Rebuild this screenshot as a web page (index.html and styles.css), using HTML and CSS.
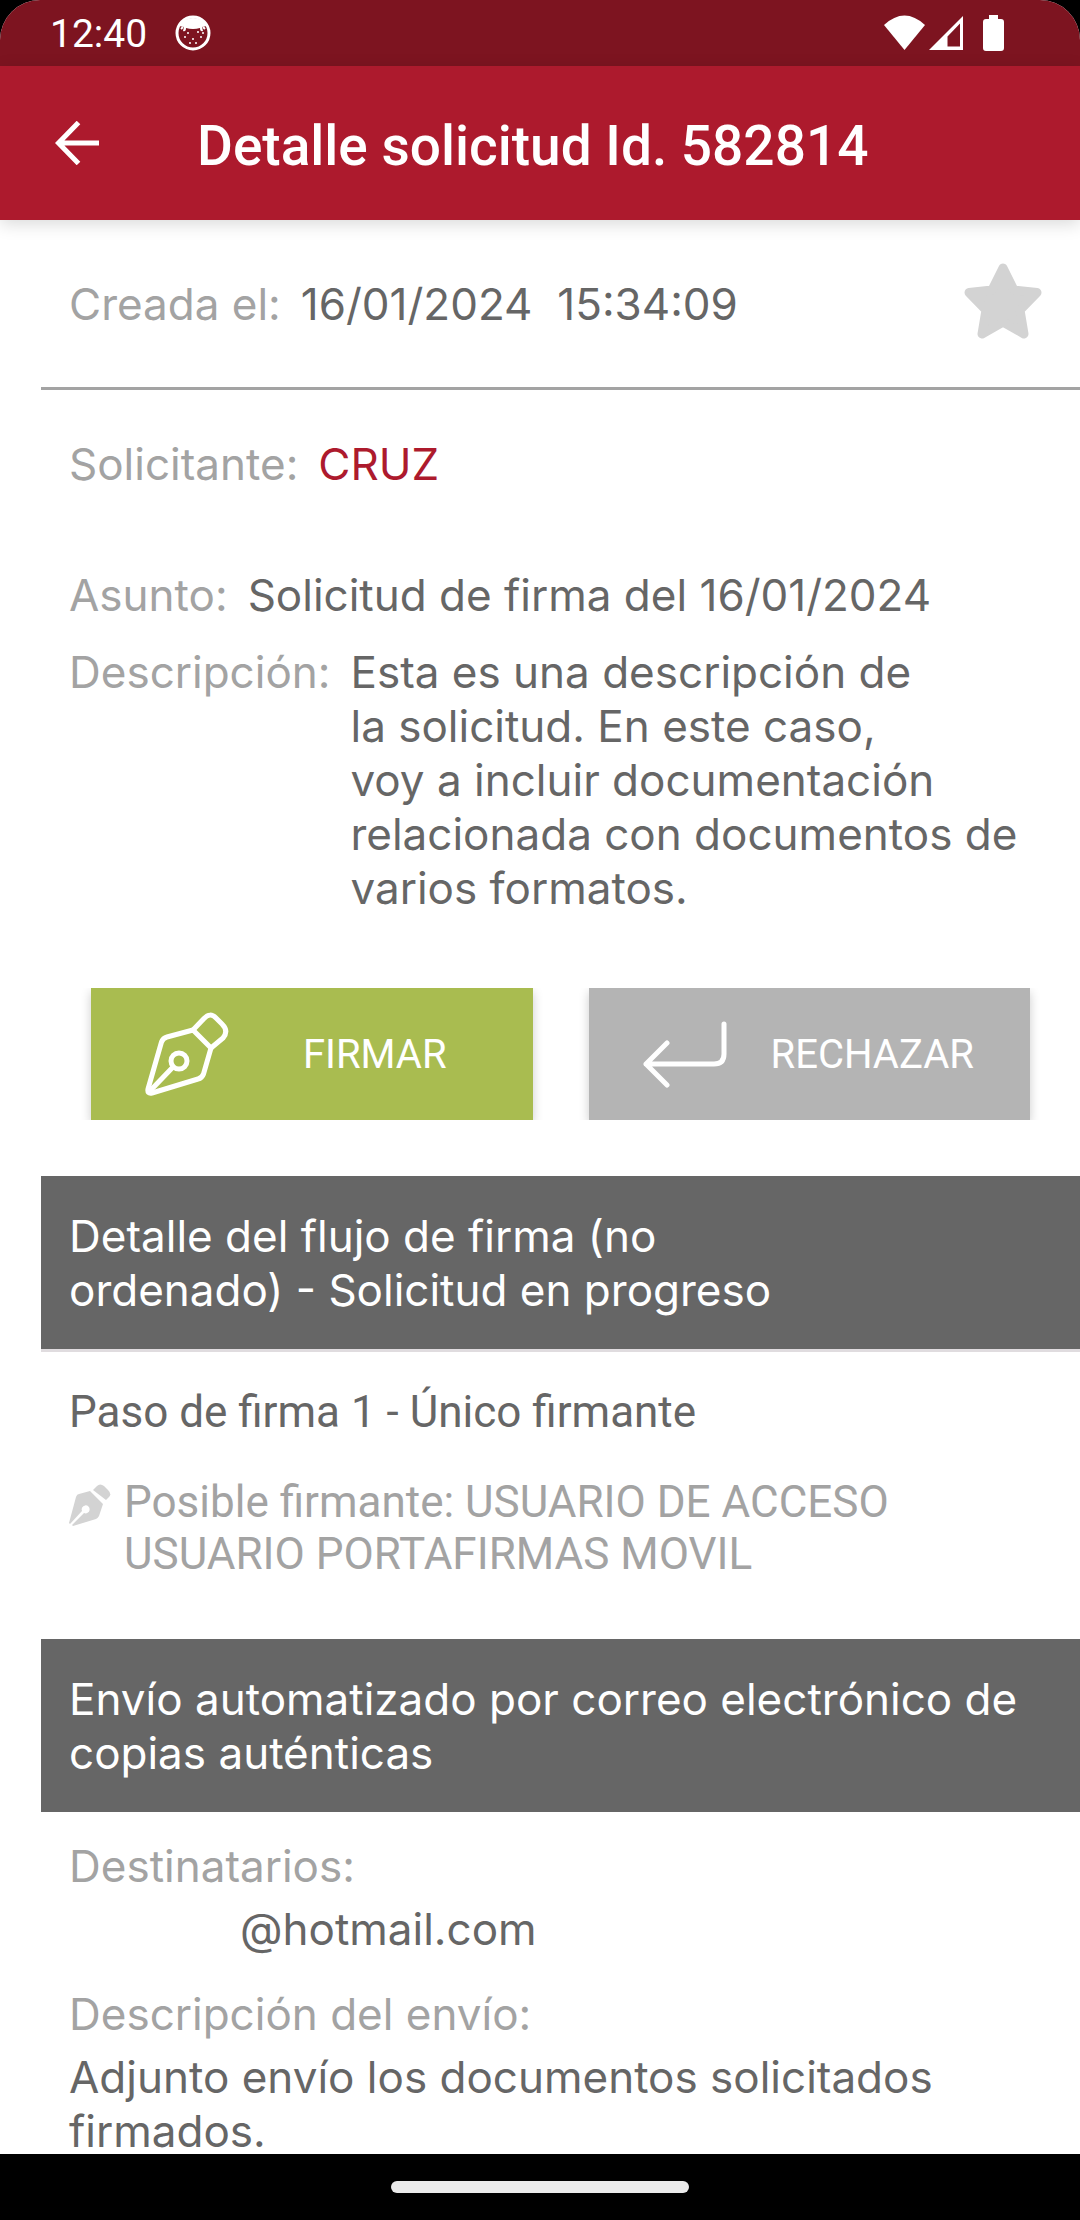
FILE: index.html
```html
<!DOCTYPE html>
<html lang="es">
<head>
    <meta charset="UTF-8">
    <meta name="viewport" content="width=device-width, initial-scale=1.0">
    <title>Detalle solicitud</title>
    <link rel="stylesheet" href="styles.css">
</head>
<body>
    <div class="screen">
        <div class="status-bar">
            <span class="clock">12:40</span>
            <svg class="cat-icon" viewBox="0 0 36 36">
                <circle cx="18" cy="18" r="16" fill="none" stroke="#fff" stroke-width="3"/>
                <path d="M7 7Q18-1 29 7L32 11L27 12L28 16Q25 17 25 13Q18 15 11 13Q11 17 8 16L9 12L4 11Z" fill="#fff"/>
                <path d="M6 14L8 12M30 14L28 12" stroke="#fff" stroke-width="2"/>
                <g fill="#fff">
                    <circle cx="13" cy="18" r="1"/><circle cx="23" cy="17" r="1"/>
                    <circle cx="10" cy="22" r="1"/><circle cx="18" cy="24" r="1"/>
                    <circle cx="26" cy="22" r="1"/><circle cx="15" cy="28" r="1"/>
                    <circle cx="21" cy="28" r="1"/><circle cx="28" cy="18" r="1"/>
                </g>
            </svg>
            <div class="status-icons">
                <svg width="41" height="36" viewBox="0 0 41 36"><path d="M0 10Q20.500-9 41 10L20.500 35Z" fill="#fff"/></svg>
                <svg class="signal" width="34" height="36" viewBox="0 0 34 36"><path fill-rule="evenodd" d="M34 1V35H0ZM31 8.500L18.500 21.500V31.500H31Z" fill="#fff"/></svg>
                <svg width="21" height="36" viewBox="0 0 21 36"><path d="M6 0H15V4H18Q21 4 21 7V33Q21 36 18 36H3Q0 36 0 33V7Q0 4 3 4H6Z" fill="#fff"/></svg>
            </div>
        </div>

        <header class="app-bar">
            <button class="back" type="button" aria-label="Volver">
                <svg width="44" height="44" viewBox="0 0 44 44"><path d="M23.500 1.500L3.500 22L23.500 42.500M3.500 22H44" fill="none" stroke="#fff" stroke-width="5"/></svg>
            </button>
            <h1>Detalle solicitud Id. 582814</h1>
        </header>

        <main>
            <div class="created">
                <div class="field">
                    <span class="label">Creada el:</span>
                    <span class="value">16/01/2024&nbsp; 15:34:09</span>
                </div>
                <button class="star" type="button" aria-label="Favorito">
                    <svg width="78" height="76" viewBox="0 0 78 76"><path d="M39 5L50 27L73 29.500L56 47L60 71L39 59L18 71L22 47L5 29.500L28 27Z" fill="#d3d3d3" stroke="#d3d3d3" stroke-width="9" stroke-linejoin="round"/></svg>
                </button>
            </div>

            <div class="info">
                <div class="field applicant">
                    <span class="label">Solicitante:</span>
                    <span class="name">CRUZ</span>
                </div>
                <div class="field subject">
                    <span class="label">Asunto:</span>
                    <span class="value">Solicitud de firma del 16/01/2024</span>
                </div>
                <div class="field">
                    <span class="label">Descripción:</span>
                    <span class="value">Esta es una descripción de<br>la solicitud. En este caso,<br>voy a incluir documentación relacionada con documentos de varios formatos.</span>
                </div>
            </div>

            <div class="actions">
                <button class="sign" type="button">
                    <svg width="84" height="84" viewBox="0 0 84 84" fill="none" stroke="#fff" stroke-width="5" stroke-linejoin="round" stroke-linecap="round">
                        <path d="M48 18L22 25Q18 26 16.500 30L3 77Q2 82 7 81L53 67Q57 66 58.500 62L66 36Z"/>
                        <path d="M48 18L59 6.500Q65 0 71 6L77 12Q84 19 78 26L66 36"/>
                        <circle cx="34" cy="49" r="8"/>
                        <path d="M28 55L4 80"/>
                    </svg>
                    <span>FIRMAR</span>
                </button>
                <button class="reject" type="button">
                    <svg width="84" height="84" viewBox="0 0 84 84" fill="none" stroke="#fff" stroke-width="5" stroke-linejoin="round" stroke-linecap="round">
                        <path d="M81 12V42Q81 52 71 52H3M24 31L3 52L24 73"/>
                    </svg>
                    <span>RECHAZAR</span>
                </button>
            </div>

            <h2 class="ruled">Detalle del flujo de firma (no<br>ordenado) - Solicitud en progreso</h2>
            <div class="flow">
                <p class="step">Paso de firma 1 - Único firmante</p>
                <div class="signer">
                    <svg width="42" height="42" viewBox="0 0 42 42" fill="#d3d3d3">
                        <path d="M21 7L10 10Q8 10 7 13L0 39L1 40L13 27A4 4 0 1 1 15 29L3 41L4 42L27 35Q29 34 30 32L34 20Z"/>
                        <path d="M24 6L28 2Q31-1 35 2L39 6Q43 10 40 13L37 16Z"/>
                    </svg>
                    <p>Posible firmante: USUARIO DE ACCESO USUARIO PORTAFIRMAS MOVIL</p>
                </div>
            </div>

            <h2>Envío automatizado por correo electrónico de copias auténticas</h2>
            <div class="delivery">
                <p class="label">Destinatarios:</p>
                <p class="value recipient">@hotmail.com</p>
                <p class="label">Descripción del envío:</p>
                <p class="value">Adjunto envío los documentos solicitados firmados.</p>
            </div>
        </main>
    </div>

    <div class="nav-bar"><div class="handle"></div></div>
</body>
</html>
```
FILE: styles.css
```css
* {
    margin: 0;
    padding: 0;
    box-sizing: border-box;
}
body {
    display: flex;
    flex-direction: column;
    height: 100vh;
    background: #000;
    font-family: Inter, sans-serif;
    font-size: 44px;
    line-height: 54px;
    color: #666;
}
svg {
    display: block;
    flex: none;
}
button {
    border: none;
    background: none;
    cursor: pointer;
}
.screen {
    flex: 1;
    min-height: 0;
    display: flex;
    flex-direction: column;
    background: #fff;
    border-radius: 40px 40px 0 0;
    overflow: hidden;
}

/* Status bar */
.status-bar {
    flex: none;
    display: flex;
    align-items: center;
    height: 66px;
    padding: 0 76px 0 50px;
    background: #7d1420;
    color: #fff;
    font-family: Roboto, sans-serif;
    font-size: 39px;
}
.clock {
    padding-top: 2px;
}
.cat-icon {
    width: 36px;
    height: 36px;
    margin-left: 28px;
}
.status-icons {
    display: flex;
    margin-left: auto;
}
.signal {
    margin: 0 20px 0 4px;
}

/* App bar */
.app-bar {
    flex: none;
    display: flex;
    align-items: center;
    gap: 98px;
    height: 154px;
    padding: 0 55px;
    background: #ad1a2d;
    color: #fff;
    box-shadow: 0 4px 16px rgba(0, 0, 0, 0.15);
}
.app-bar h1 {
    font-family: Roboto, sans-serif;
    font-size: 55px;
    font-weight: 500;
    line-height: 66px;
    padding-top: 6px;
}

main {
    flex: 1;
    min-height: 0;
    padding-left: 41px;
    overflow: hidden;
}
.created {
    display: flex;
    align-items: center;
    justify-content: space-between;
    height: 170px;
    padding: 0 38px 0 28px;
    border-bottom: 3px solid #a3a3a3;
}
.star {
    margin-bottom: 6px;
}
.field {
    display: flex;
    gap: 20px;
}
.label {
    flex: none;
    color: #a3a3a3;
}
.name {
    color: #ad1a2d;
}
.info {
    padding: 47px 60px 73px 28px;
}
.applicant {
    margin-bottom: 77px;
}
.subject {
    margin-bottom: 23px;
}

/* Sign and reject buttons */
.actions {
    display: flex;
    gap: 56px;
    padding: 0 50px;
    margin-bottom: 56px;
    overflow: hidden;
}
.actions button {
    flex: 1;
    display: flex;
    align-items: center;
    height: 132px;
    padding: 0 12px 0 54px;
    color: #fff;
    font-family: Roboto, sans-serif;
    font-size: 40px;
    box-shadow: 0 4px 10px rgba(0, 0, 0, 0.2);
}
.actions span {
    flex: 1;
    text-align: center;
}
.actions .sign {
    background: #a9bc50;
}
.actions .reject {
    background: #b4b4b4;
}

/* Section headings */
h2 {
    padding: 33px 60px 32px 28px;
    background: #666;
    color: #fff;
    font-size: 44px;
    font-weight: 400;
}
.ruled {
    border-bottom: 3px solid #e0dcdf;
}
.flow {
    padding: 34px 60px 59px 28px;
    font-family: Roboto, sans-serif;
    line-height: 52px;
}
.step {
    margin-bottom: 38px;
}
.signer {
    display: flex;
    gap: 13px;
    color: #a3a3a3;
}
.signer svg {
    margin-top: 8px;
}
.delivery {
    padding: 27px 60px 0 28px;
}
.delivery .label {
    margin-bottom: 9px;
}
.recipient {
    margin-bottom: 31px;
    padding-left: 171px;
}

.nav-bar {
    flex: none;
    display: flex;
    justify-content: center;
    height: 66px;
    padding-top: 27px;
}
.handle {
    width: 298px;
    height: 12px;
    border-radius: 6px;
    background: #ebebeb;
}
```
